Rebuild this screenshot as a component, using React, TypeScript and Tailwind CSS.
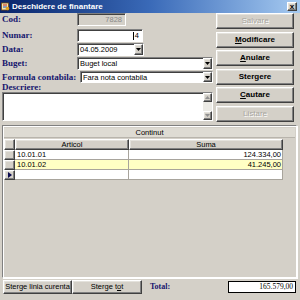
import React from "react";

const raised =
  "border border-t-white border-l-white border-b-[#404040] border-r-[#404040] shadow-[inset_-1px_-1px_0_#808080,inset_1px_1px_0_#e4e2dc]";
const sunken =
  "border border-t-[#808080] border-l-[#808080] border-b-white border-r-white shadow-[inset_1px_1px_0_#404040]";

function Label({ text, w }: { text: string; w: string }) {
  return (
    <div className={`${w} shrink-0 font-['Liberation_Serif',serif] font-bold text-[9px] leading-none text-[#16166e]`}>
      {text}
    </div>
  );
}

function Arrow() {
  return (
    <div className={`${raised} w-[9px] h-full bg-[#d4d0c8] flex items-center justify-center shrink-0`}>
      <svg width="5" height="3" viewBox="0 0 5 3">
        <path d="M0 0h5L2.5 3z" fill="#000" />
      </svg>
    </div>
  );
}

function Combo({ value, w }: { value: string; w: string }) {
  return (
    <div className={`${sunken} ${w} h-full bg-white flex items-stretch`}>
      <div className="flex-1 pl-[2px] text-[7.5px] leading-[11px] text-black">{value}</div>
      <Arrow />
    </div>
  );
}

function SideButton({ label, u, disabled }: { label: string; u?: number; disabled?: boolean }) {
  const chars = label.split("");
  return (
    <div
      className={`${raised} h-[16px] bg-[#d4d0c8] flex items-center justify-center text-[8px] font-bold ${
        disabled ? "text-[#a8a6a0] [text-shadow:1px_1px_0_#fff] font-normal" : "text-black"
      }`}
    >
      {chars.map((c, i) => (
        <span key={i} className={i === u ? "underline" : ""}>
          {c}
        </span>
      ))}
    </div>
  );
}

const rows = [
  { art: "10.01.01", sum: "124.334,00", bg: "bg-white" },
  { art: "10.01.02", sum: "41.245,00", bg: "bg-[#ffffc4]" },
  { art: "", sum: "", bg: "bg-white", current: true },
];

export default function App() {
  return (
    <div className="w-[300px] h-[300px] bg-[#d4d0c8] overflow-hidden flex flex-col font-['Liberation_Sans',Arial,sans-serif]">
      {/* title bar */}
      <div className="h-[13px] shrink-0 flex items-center bg-linear-to-r from-[#0a246a] via-[#3a6ab8] to-[#a6caf0] pl-[1px] pr-[3px]">
        <svg width="9" height="9" viewBox="0 0 9 9" className="shrink-0">
          <rect x="0.5" y="1" width="7" height="7" fill="#f3e7b0" stroke="#7a4a10" strokeWidth="0.8" />
          <rect x="2" y="2.5" width="4" height="1" fill="#c02020" />
          <rect x="2" y="4.5" width="4" height="1" fill="#2050c0" />
          <circle cx="6.5" cy="6.5" r="1.8" fill="#e0a020" />
        </svg>
        <div className="ml-[2px] text-white font-bold text-[8px] leading-none">Deschidere de finantare</div>
        <div className="flex-1" />
        <div className={`${raised} w-[10px] h-[9px] bg-[#d4d0c8] flex items-center justify-center text-[8px] leading-none font-bold text-black`}>
          x
        </div>
      </div>

      {/* form + side buttons */}
      <div className="flex pl-[2px]">
        <div className="w-[211px] flex flex-col">
          <div className="flex items-center h-[13px]">
            <Label text="Cod:" w="w-[75px]" />
            <div className={`${sunken} w-[49px] h-full bg-[#d4d0c8] text-right pr-[3px] text-[7.5px] leading-[11px] text-[#8a8a8a]`}>
              7828
            </div>
          </div>
          <div className="flex items-center h-[13px] mt-[3px]">
            <Label text="Numar:" w="w-[75px]" />
            <div className={`${sunken} w-[66px] h-full bg-white flex items-center justify-end pr-[3px] text-[7.5px] leading-none`}>
              <span className="w-px h-[8px] bg-black mr-px" />
              4
            </div>
          </div>
          <div className="flex items-center h-[13px] mt-[1px]">
            <Label text="Data:" w="w-[75px]" />
            <Combo value="04.05.2009" w="w-[67px]" />
          </div>
          <div className="flex items-center h-[13px] mt-[1px]">
            <Label text="Buget:" w="w-[75px]" />
            <Combo value="Buget local" w="w-[136px]" />
          </div>
          <div className="flex items-center h-[12px] mt-[1px]">
            <Label text="Formula contabila:" w="w-[78px]" />
            <Combo value="Fara nota contabila" w="w-[133px]" />
          </div>
          <div className="h-[9px] flex items-end">
            <Label text="Descriere:" w="w-[75px]" />
          </div>
          <div className={`${sunken} h-[29px] w-full bg-white flex justify-end`}>
            <div className="w-[9px] h-full bg-[#ecebe6] flex flex-col justify-between">
              <div className={`${raised} h-[9px] bg-[#d4d0c8] flex items-center justify-center`}>
                <svg width="5" height="3" viewBox="0 0 5 3">
                  <path d="M0 3h5L2.5 0z" fill="#909090" />
                </svg>
              </div>
              <div className={`${raised} h-[9px] bg-[#d4d0c8] flex items-center justify-center`}>
                <svg width="5" height="3" viewBox="0 0 5 3">
                  <path d="M0 0h5L2.5 3z" fill="#909090" />
                </svg>
              </div>
            </div>
          </div>
        </div>

        <div className="ml-[3px] w-[78px] flex flex-col gap-[2.5px]">
          <SideButton label="Salvare" disabled />
          <SideButton label="Modificare" u={0} />
          <SideButton label="Anulare" u={0} />
          <SideButton label="Stergere" />
          <SideButton label="Cautare" u={0} />
          <SideButton label="Listare" disabled />
        </div>
      </div>

      {/* grid panel */}
      <div className="mt-[3px] ml-[2px] w-[295px] h-[153px] border border-t-[#808080] border-l-[#808080] border-b-white border-r-white shadow-[inset_1px_1px_0_#fff,1px_1px_0_#fff] flex flex-col">
        <div className="mt-[2px] mx-[1px] h-[10px] bg-[#dedbd3] border-b border-[#b8b4ac] text-[7.5px] leading-[10px] text-center text-black">
          Continut
        </div>
        <div className="mx-[1px] flex h-[11px] mt-[1px]">
          <div className={`${raised} w-[11px] bg-[#d4d0c8]`} />
          <div className={`${raised} w-[114px] bg-[#d4d0c8] text-[7.5px] leading-[9px] text-center`}>Articol</div>
          <div className={`${raised} w-[154px] bg-[#d4d0c8] text-[7.5px] leading-[9px] text-center`}>Suma</div>
        </div>
        {rows.map((r, i) => (
          <div key={i} className="mx-[1px] flex h-[10px]">
            <div className={`${raised} w-[11px] bg-[#d4d0c8] flex items-center justify-center`}>
              {r.current && (
                <svg width="4" height="6" viewBox="0 0 4 6">
                  <path d="M0 0l4 3-4 3z" fill="#0a0a50" />
                </svg>
              )}
            </div>
            <div className={`${r.bg} w-[114px] border-r border-b border-[#a8a49c] pl-[2px] text-[7.5px] leading-[9px] text-black`}>
              {r.art}
            </div>
            <div className={`${r.bg} w-[154px] border-r border-b border-[#a8a49c] pr-[1px] text-right text-[7.5px] leading-[9px] text-black`}>
              {r.sum}
            </div>
          </div>
        ))}
      </div>

      {/* bottom bar */}
      <div className="flex items-center pl-[3px] pr-[4px] mt-[2px] h-[14px]">
        <div className={`${raised} w-[69px] h-[14px] bg-[#d4d0c8] text-[7.5px] leading-[12px] text-center text-black`}>
          Sterge linia curenta
        </div>
        <div className={`${raised} w-[70px] h-[14px] bg-[#d4d0c8] text-[7.5px] leading-[12px] text-center text-black`}>
          Sterge t<span className="underline">o</span>t
        </div>
        <div className="ml-[8px] font-['Liberation_Serif',serif] font-bold text-[8px] text-[#16166e] leading-none">
          Total:
        </div>
        <div className="flex-1" />
        <div className="w-[68px] h-[12px] border border-black bg-white text-right pr-[2px] font-['Liberation_Serif',serif] text-[7.5px] leading-[10px] text-black">
          165.579,00
        </div>
      </div>
    </div>
  );
}
